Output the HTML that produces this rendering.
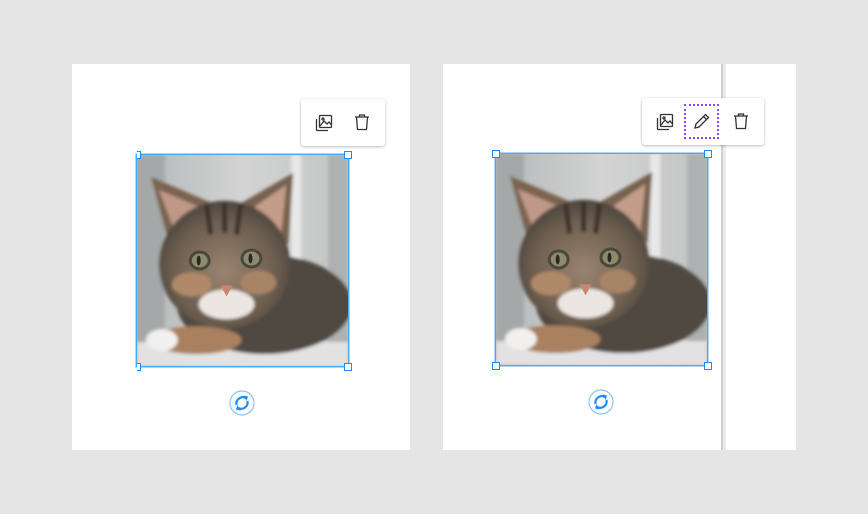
<!DOCTYPE html>
<html><head><meta charset="utf-8"><style>
*{margin:0;padding:0;box-sizing:border-box}
body{width:868px;height:514px;background:#e5e5e5;position:relative;overflow:hidden;font-family:"Liberation Sans",sans-serif}
.card{position:absolute;background:#fff}
.img{position:absolute;width:213px;height:213px;border:1px solid #4aa8f5;box-shadow:0 0 0 1px rgba(90,176,245,.5);overflow:hidden}
.img svg.cat{position:absolute;left:0;top:0;width:211px;height:211px}
.h{position:absolute;width:8px;height:8px;background:#fff;border:1px solid #1a8cff}
.tb{position:absolute;background:#fff;border-radius:3px;box-shadow:0 1px 3px rgba(0,0,0,.25),0 0 1px rgba(0,0,0,.1)}
.ic{position:absolute}
.rot{position:absolute;width:26px;height:26px}
</style></head><body>
<div class="card" style="left:72px;top:64px;width:338px;height:386px"></div>
<div class="card" style="left:443px;top:64px;width:353px;height:386px"></div>
<div style="position:absolute;left:721px;top:64px;width:2px;height:386px;background:#cfcfcf"></div>
<div style="position:absolute;left:723px;top:64px;width:3px;height:386px;background:#ececec"></div>

<svg width="0" height="0" style="position:absolute">
<defs>
<filter id="bl"><feGaussianBlur stdDeviation="1.5"/></filter>
<linearGradient id="bg" x1="0" x2="1"><stop offset="0" stop-color="#b3b7b8"/><stop offset=".5" stop-color="#d3d4d3"/><stop offset="1" stop-color="#c2c5c5"/></linearGradient>
<radialGradient id="face" cx=".5" cy=".55" r=".55"><stop offset="0" stop-color="#9a8470"/><stop offset=".7" stop-color="#6e5f50"/><stop offset="1" stop-color="#4e463e"/></radialGradient>
<symbol id="cat" viewBox="0 0 212 212">
<rect width="212" height="212" fill="url(#bg)"/>
<g filter="url(#bl)">
<rect x="0" y="0" width="28" height="212" fill="#a4a8a9"/>
<rect x="155" y="0" width="10" height="212" fill="#e8e8e8"/>
<rect x="192" y="0" width="20" height="212" fill="#aeb1b1"/>
<rect x="0" y="188" width="212" height="24" fill="#e2e2e2"/>
<ellipse cx="128" cy="150" rx="88" ry="50" fill="#4f4842"/>
<polygon points="14,22 75,48 35,100" fill="#7a6450"/>
<polygon points="157,18 105,48 152,90" fill="#76624f"/>
<polygon points="22,35 62,52 40,82" fill="#c09888"/>
<polygon points="150,30 118,52 145,78" fill="#c49c8a"/>
<ellipse cx="88" cy="110" rx="66" ry="64" fill="url(#face)"/>
<path d="M70 50 L74 80 M88 48 L88 78 M104 50 L100 80" stroke="#3a322c" stroke-width="5"/>
<ellipse cx="55" cy="130" rx="20" ry="12" fill="#b08a68"/>
<ellipse cx="122" cy="128" rx="18" ry="12" fill="#a88466"/>
<ellipse cx="90" cy="150" rx="28" ry="15" fill="#ebe6e1"/>
<ellipse cx="60" cy="186" rx="45" ry="14" fill="#a98060"/>
<ellipse cx="25" cy="186" rx="16" ry="11" fill="#f2f0ee"/>
</g>
<ellipse cx="63" cy="106" rx="11" ry="10" fill="#4a4838"/>
<ellipse cx="115" cy="104" rx="11" ry="10" fill="#4a4838"/>
<ellipse cx="63" cy="106" rx="8" ry="7" fill="#8d8a70"/>
<ellipse cx="115" cy="104" rx="8" ry="7" fill="#8d8a70"/>
<ellipse cx="62" cy="106" rx="2" ry="5" fill="#2a2820"/>
<ellipse cx="114" cy="104" rx="2" ry="5" fill="#2a2820"/>
<polygon points="84,131 96,131 90,142" fill="#c98670"/>
</symbol>
</defs></svg>

<div class="img" style="left:136px;top:154px">
<svg class="cat"><use href="#cat"/></svg>
</div>
<div class="h" style="left:137px;top:151px;width:4px;border-left:none"></div>
<div class="h" style="left:344px;top:151px"></div>
<div class="h" style="left:137px;top:363px;width:4px;border-left:none"></div>
<div class="h" style="left:344px;top:363px"></div>

<div class="img" style="left:495px;top:153px">
<svg class="cat"><use href="#cat"/></svg>
</div>
<div class="h" style="left:492px;top:150px"></div>
<div class="h" style="left:704px;top:150px"></div>
<div class="h" style="left:492px;top:362px"></div>
<div class="h" style="left:704px;top:362px"></div>

<div class="tb" style="left:301px;top:99px;width:84px;height:47px"></div>
<svg class="ic" style="left:314px;top:113px" width="20" height="20" viewBox="0 0 20 20" fill="none" stroke="#333" stroke-width="1.3">
<rect x="5.5" y="2.5" width="12" height="12" rx="1"/><path d="M2.5 6v10.5a1 1 0 0 0 1 1H14"/><path d="M6 13l4-5 3 3 2-2 2.5 3"/><circle cx="9" cy="6" r="1"/></svg>
<svg class="ic" style="left:352px;top:112px" width="20" height="20" viewBox="0 0 20 20" fill="none" stroke="#333" stroke-width="1.3">
<path d="M3 5h14"/><path d="M7.5 5V3h5v2"/><path d="M4.5 5l1 12.5h9l1-12.5"/></svg>

<div class="tb" style="left:642px;top:98px;width:122px;height:47px"></div>
<svg class="ic" style="left:655px;top:112px" width="20" height="20" viewBox="0 0 20 20" fill="none" stroke="#333" stroke-width="1.3">
<rect x="5.5" y="2.5" width="12" height="12" rx="1"/><path d="M2.5 6v10.5a1 1 0 0 0 1 1H14"/><path d="M6 13l4-5 3 3 2-2 2.5 3"/><circle cx="9" cy="6" r="1"/></svg>
<div style="position:absolute;left:684px;top:104px;width:35px;height:35px;border:2px dotted #9146ff"></div>
<svg class="ic" style="left:692px;top:111px" width="20" height="20" viewBox="0 0 20 20" fill="none" stroke="#333" stroke-width="1.3">
<path d="M3 17l1-4L13.5 3.5l3 3L7 16z"/><path d="M11.5 5.5l3 3"/></svg>
<svg class="ic" style="left:731px;top:111px" width="20" height="20" viewBox="0 0 20 20" fill="none" stroke="#333" stroke-width="1.3">
<path d="M3 5h14"/><path d="M7.5 5V3h5v2"/><path d="M4.5 5l1 12.5h9l1-12.5"/></svg>

<svg class="rot" style="left:229px;top:390px" viewBox="0 0 26 26">
<circle cx="13" cy="13" r="12" fill="#fff" stroke="#8cc4f5" stroke-width="1.2"/>
<path d="M17 8A6.5 6.5 0 0 0 7.5 15" fill="none" stroke="#1a8cff" stroke-width="2.2"/>
<path d="M9 18A6.5 6.5 0 0 0 18.5 11" fill="none" stroke="#1a8cff" stroke-width="2.2"/>
<path d="M14.5 5.5l4.5 1-1.5 4.5z" fill="#1a8cff"/><path d="M11.5 20.5l-4.5-1 1.5-4.5z" fill="#1a8cff"/>
</svg>
<svg class="rot" style="left:588px;top:389px" viewBox="0 0 26 26">
<circle cx="13" cy="13" r="12" fill="#fff" stroke="#8cc4f5" stroke-width="1.2"/>
<path d="M17 8A6.5 6.5 0 0 0 7.5 15" fill="none" stroke="#1a8cff" stroke-width="2.2"/>
<path d="M9 18A6.5 6.5 0 0 0 18.5 11" fill="none" stroke="#1a8cff" stroke-width="2.2"/>
<path d="M14.5 5.5l4.5 1-1.5 4.5z" fill="#1a8cff"/><path d="M11.5 20.5l-4.5-1 1.5-4.5z" fill="#1a8cff"/>
</svg>
</body></html>
